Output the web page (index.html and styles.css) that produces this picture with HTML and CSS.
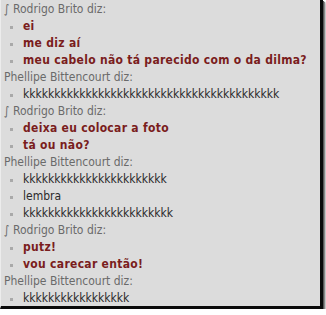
FILE: index.html
```html
<!DOCTYPE html>
<html>
<head>
<meta charset="utf-8">
<link rel="stylesheet" href="styles.css">
</head>
<body>
<div class="frame">
  <div class="who">∫ Rodrigo Brito diz:</div>
  <div class="msg red">ei</div>
  <div class="msg red">me diz aí</div>
  <div class="msg red">meu cabelo não tá parecido com o da dilma?</div>
  <div class="who">Phellipe Bittencourt diz:</div>
  <div class="msg">kkkkkkkkkkkkkkkkkkkkkkkkkkkkkkkkkkkkkkkkk</div>
  <div class="who">∫ Rodrigo Brito diz:</div>
  <div class="msg red">deixa eu colocar a foto</div>
  <div class="msg red">tá ou não?</div>
  <div class="who">Phellipe Bittencourt diz:</div>
  <div class="msg">kkkkkkkkkkkkkkkkkkkkkkk</div>
  <div class="msg">lembra</div>
  <div class="msg">kkkkkkkkkkkkkkkkkkkkkkkk</div>
  <div class="who">∫ Rodrigo Brito diz:</div>
  <div class="msg red">putz!</div>
  <div class="msg red">vou carecar então!</div>
  <div class="who">Phellipe Bittencourt diz:</div>
  <div class="msg">kkkkkkkkkkkkkkkkk</div>
</div>
</body>
</html>
```
FILE: styles.css
```css
html, body {
  margin: 0;
  padding: 0;
  background: #ffffff;
}
.frame {
  box-sizing: border-box;
  width: 323px;
  height: 309px;
  background: #dcdcdc;
  border-left: 1px solid #ececec;
  border-right: 3px solid #0a0a0a;
  border-bottom: 3px solid #0a0a0a;
  box-shadow: 1px 1px 0 #555, 2px 2px 1px #888, 3px 3px 2px #bbb;
  overflow: hidden;
  font-family: "DejaVu Sans Condensed", "DejaVu Sans", sans-serif;
  font-size: 12px;
  line-height: 17px;
  padding-left: 3px;
  padding-top: 1px;
}
.who {
  color: #6a6a6a;
  white-space: nowrap;
}
.msg {
  display: flex;
  align-items: center;
  color: #2a2a2a;
  white-space: nowrap;
}
.msg::before {
  content: "";
  width: 3px;
  height: 3px;
  background: #a9a9a9;
  margin: 1px 10px 0 6px;
  flex: none;
}
.red {
  color: #7a1d1d;
  font-weight: bold;
  letter-spacing: 0.3px;
}
```
